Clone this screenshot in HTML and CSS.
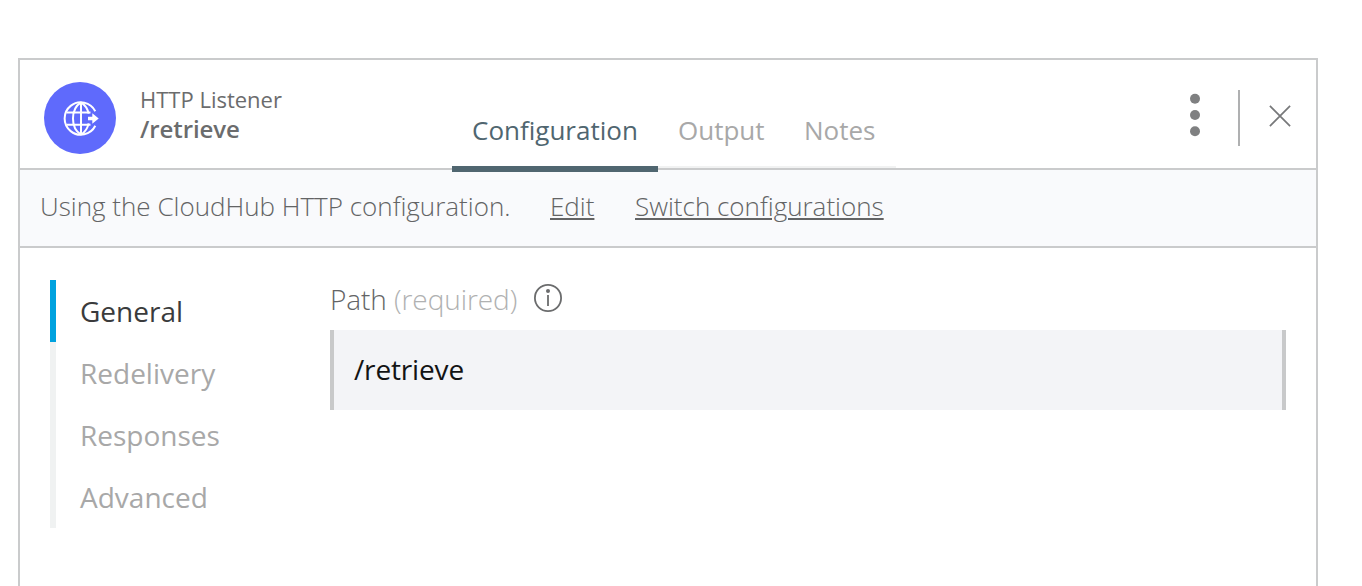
FILE: index.html
```html
<!DOCTYPE html>
<html lang="en">
<head>
<meta charset="utf-8">
<title>HTTP Listener</title>
<link rel="stylesheet" href="styles.css">
</head>
<body>
<main class="panel">
  <header class="header">
    <svg class="logo" viewBox="0 0 72 72" fill="none" stroke="#fff" stroke-width="2">
      <circle cx="36" cy="36" r="36" fill="#5f6afc" stroke="none"/>
      <path d="M51.3 29.2A16.2 16.2 0 1 0 51.3 43.8"/>
      <path d="M37 20.3V52.7"/>
      <path d="M37 20.3C26.3 27 26.3 46 37 52.7"/>
      <path d="M37 20.3C41.2 23 43.7 27 44.6 31.6M37 52.7C41.2 50 43.7 46 44.6 41.4"/>
      <path d="M22.7 30.5H46.5M22.7 42.7H46.5"/>
      <path d="M44 34.8H48.3V31.3L54.7 36.5L48.3 41.7V38.2H44Z" fill="#fff" stroke="none"/>
    </svg>
    <div class="title">
      <div class="kind">HTTP Listener</div>
      <div class="name">/retrieve</div>
    </div>
    <nav class="tabs">
      <a class="tab tab-active">Configuration</a>
      <a class="tab tab-out">Output</a>
      <a class="tab tab-notes">Notes</a>
    </nav>
    <div class="actions">
      <svg class="more" viewBox="0 0 10 44" fill="#7f8081"><circle cx="5" cy="5.7" r="5"/><circle cx="5" cy="22" r="5"/><circle cx="5" cy="38.3" r="5"/></svg>
      <span class="divider"></span>
      <svg class="close" viewBox="0 0 22 22" stroke="#77787a" stroke-width="1.7"><path d="M.9 .9L21.1 21.1M21.1 .9L.9 21.1"/></svg>
    </div>
  </header>
  <div class="notice">
    <span class="notice-text">Using the CloudHub HTTP configuration.</span>
    <a class="link link-edit">Edit</a>
    <a class="link link-switch">Switch configurations</a>
  </div>
  <div class="content">
    <nav class="side">
      <a class="item item-active">General</a>
      <a class="item">Redelivery</a>
      <a class="item">Responses</a>
      <a class="item">Advanced</a>
    </nav>
    <section class="form">
      <div class="label">
        <span class="label-text">Path <span class="required">(required)</span></span>
        <svg class="info" viewBox="0 0 28 28"><circle cx="14" cy="14" r="13.1" fill="none" stroke="#6b6c6d" stroke-width="1.8"/><circle cx="14" cy="6.9" r="2" fill="#6b6c6d"/><path d="M14 11V22" stroke="#6b6c6d" stroke-width="1.8"/></svg>
      </div>
      <div class="field">/retrieve</div>
    </section>
  </div>
</main>
</body>
</html>
```
FILE: styles.css
```css
* { box-sizing: border-box; }
html, body { height: 100%; }
body {
  margin: 0;
  padding: 58px 44px 0 18px;
  background: #fff;
  overflow: hidden;
  font-family: "Open Sans", sans-serif;
  white-space: nowrap;
}
.panel {
  height: 540px;
  border: 2px solid #cacbcc;
}
.header {
  display: flex;
  height: 110px;
  padding-left: 24px;
  border-bottom: 2px solid #cacbcc;
}
.logo { width: 72px; height: 72px; margin-top: 22px; flex: none; }
.title { width: 312px; margin: 25px 0 0 24px; color: #6b6c6d; }
.kind { font-size: 22px; line-height: 29px; }
.name { font-size: 24px; line-height: 30px; font-weight: 600; letter-spacing: -0.1px; }
.tabs { display: flex; height: 108px; }
.tab {
  height: 108px;
  padding: 0 20px;
  font-size: 26px;
  line-height: 140px;
  color: #a8a8a8;
  border-bottom: 2px solid #f1f2f2;
}
.tab-active {
  width: 206px;
  height: 112px;
  color: #506670;
  border-bottom: 6px solid #506670;
  z-index: 1;
}
.tab-out { width: 126px; }
.tab-notes { width: 112px; }
.actions { display: flex; align-items: center; height: 56px; margin: 30px 25px 0 auto; }
.more { width: 10px; height: 44px; margin-top: -6px; }
.divider { width: 2px; height: 56px; margin: 0 29px 0 38px; background: #afb0b1; }
.close { width: 22px; height: 22px; margin-top: -4px; }
.notice {
  display: flex;
  height: 78px;
  padding-left: 20px;
  font-size: 26px;
  font-weight: 300;
  line-height: 73px;
  color: #636465;
  background: #f9fafc;
  border-bottom: 2px solid #cacbcc;
}
.notice-text { width: 510px; }
.link { text-decoration: underline; text-decoration-thickness: 2px; text-underline-offset: 2px; }
.link-edit { width: 85px; }
.content { display: flex; padding: 32px 30px 0; }
.side { width: 280px; font-size: 28px; line-height: 62px; color: #a8a8a8; }
.item { display: block; padding-left: 24px; border-left: 6px solid #f0f2f2; }
.item-active { color: #3a3b3c; border-color: #00a2df; }
.form { flex: 1; }
.label {
  display: flex;
  height: 50px;
  font-size: 28px;
  font-weight: 300;
  line-height: 38px;
  color: #636465;
}
.label-text { letter-spacing: -0.08px; }
.required { color: #b0b1b1; }
.info { width: 28px; height: 28px; margin: 4px 0 0 17px; }
.field {
  height: 80px;
  padding-left: 20px;
  font-size: 28px;
  line-height: 79px;
  letter-spacing: -0.15px;
  color: #121314;
  background: #f3f4f7;
  border: solid #c8c9ca;
  border-width: 0 4px;
}
```
